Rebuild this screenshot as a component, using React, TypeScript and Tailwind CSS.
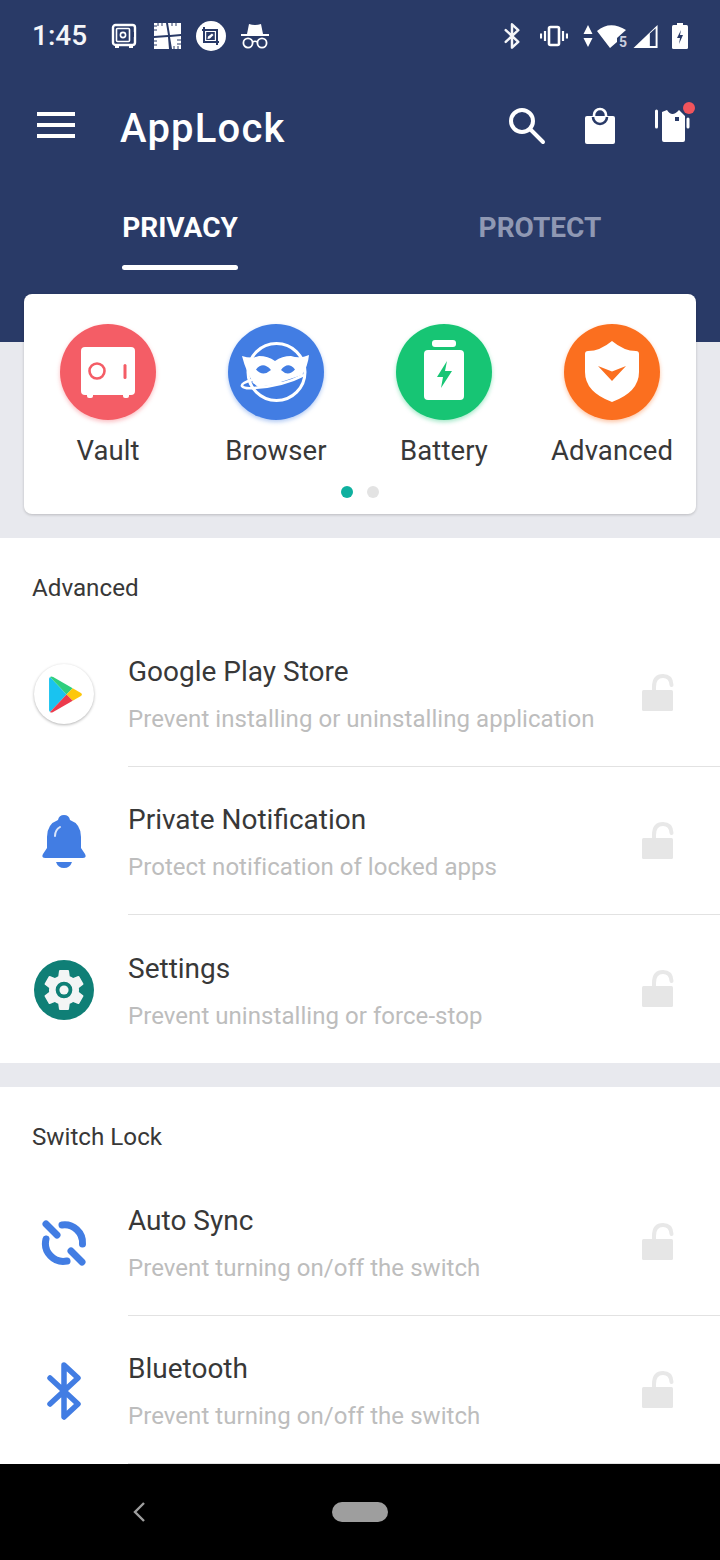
const Bluetooth = ({ className }: { className?: string }) => (
  <svg viewBox="0 0 34 58" className={className} fill="none" stroke="currentColor" strokeWidth="5.5" strokeLinecap="round" strokeLinejoin="round">
    <path d="M3 16 L31 42 L17 55 V3 L31 16 L3 42" />
  </svg>
);

const StatusLeft = () => (
  <div className="flex items-center">
    <span className="w-[79px] text-[28px] font-medium leading-none text-[#f4f5f8]">1:45</span>
    <svg viewBox="0 0 26 26" className="h-[26px] w-[26px]">
      <rect x="2" y="2" width="22" height="20" rx="2.5" fill="none" stroke="white" strokeWidth="2.4" />
      <rect x="5.5" y="5.5" width="13" height="13" rx="1" fill="none" stroke="white" strokeWidth="1.6" />
      <circle cx="12" cy="12" r="2.6" fill="none" stroke="white" strokeWidth="1.6" />
      <rect x="21" y="9" width="2" height="5" fill="#293a67" />
      <rect x="4" y="22" width="4" height="3" fill="white" />
      <rect x="18" y="22" width="4" height="3" fill="white" />
    </svg>
    <svg viewBox="0 0 28 28" className="ml-[16px] h-[28px] w-[28px]">
      <path d="M1 1 H13 L15 13 L1 14 Z M15 1 H28 V12 L17 13 Z M1 16 L15 15 L16 27 H1 Z M17 15 L28 14 V27 H19 Z" fill="white" />
      <path d="M1 4 H4 M1 8 H4 M1 19 H4 M1 23 H4 M24 18 H28 M24 22 H28 M5 1 V4 M9 1 V4 M19 1 V4 M23 1 V4 M21 24 V27 M25 24 V27" stroke="#293a67" strokeWidth="1" />
    </svg>
    <svg viewBox="0 0 30 30" className="ml-[15px] h-[30px] w-[30px]">
      <circle cx="15" cy="15" r="15" fill="white" />
      <path d="M8 6 V21 H23 M6 9 H21 V24" fill="none" stroke="#293a67" strokeWidth="2" />
      <rect x="10.2" y="11" width="8.6" height="8" fill="#293a67" />
      <path d="M11.5 18 L12 15.5 L16 12.5 L17.5 14 L14 17.5 Z" fill="white" />
    </svg>
    <svg viewBox="0 0 28 28" className="ml-[15px] h-[28px] w-[28px]">
      <path d="M6 12 L8 2 Q14 4 20 2 L22 12 Z" fill="white" />
      <rect y="12" width="28" height="2" fill="white" />
      <circle cx="7" cy="21" r="4.6" fill="none" stroke="white" strokeWidth="1.8" />
      <circle cx="21" cy="21" r="4.6" fill="none" stroke="white" strokeWidth="1.8" />
      <path d="M11.5 20 Q14 18.5 16.5 20" fill="none" stroke="white" strokeWidth="1.6" />
    </svg>
  </div>
);

const StatusRight = () => (
  <div className="flex items-center text-[#f4f5f8]">
    <Bluetooth className="h-[26px] w-[16px]" />
    <svg viewBox="0 0 28 22" className="ml-[20px] h-[22px] w-[28px]" fill="none" stroke="white">
      <rect x="9" y="2" width="10" height="18" rx="1.5" strokeWidth="2.6" />
      <path d="M5 6 V16 M1 8.5 V13.5 M23 6 V16 M27 8.5 V13.5" strokeWidth="2.2" />
    </svg>
    <svg viewBox="0 0 10 22" className="ml-[15px] h-[22px] w-[10px]" fill="white">
      <path d="M5 0 L9.5 9 H0.5 Z M5 22 L9.5 13 H0.5 Z" />
    </svg>
    <div className="relative ml-[4px] h-[26px] w-[30px]">
      <svg viewBox="0 0 30 26" className="h-[26px] w-[30px]">
        <path d="M0 8 Q13 -3 29 7 L20 15 V19 L13 25 Z" fill="white" />
      </svg>
      <span className="absolute bottom-[0px] right-[0px] text-[14px] font-bold leading-[14px] text-[#c9cede]">5</span>
    </div>
    <svg viewBox="0 0 26 26" className="ml-[6px] h-[25px] w-[26px]">
      <path d="M0 25 L25 1 V25 Z" fill="white" />
      <path d="M17 10 L23 4.5 V23 H17 Z" fill="#293a67" />
    </svg>
    <svg viewBox="0 0 16 26" className="ml-[13px] h-[26px] w-[16px]" fill="white">
      <rect x="5" y="0" width="6" height="3" />
      <rect x="0" y="2" width="16" height="24" rx="1.5" />
      <path d="M9 7 L5 15 H8 L7 21 L11 12 H8 Z" fill="#293a67" />
    </svg>
  </div>
);

const Toolbar = () => (
  <div className="flex h-[112px] items-center pl-[37px]">
    <div className="mb-[6px] flex w-[38px] flex-col gap-[7px]">
      <div className="h-[4px] bg-white" />
      <div className="h-[4px] bg-white" />
      <div className="h-[4px] bg-white" />
    </div>
    <span className="ml-[45px] mt-[2px] text-[40px] font-medium leading-none tracking-[1.2px] text-white">AppLock</span>
    <div className="ml-auto flex items-center pb-[4px] pr-[28px]">
      <svg viewBox="0 0 38 38" className="h-[38px] w-[38px]" fill="none" stroke="white" strokeWidth="4" strokeLinecap="round">
        <circle cx="14" cy="14" r="11" />
        <path d="M22 22 L35 35" />
      </svg>
      <svg viewBox="0 0 32 38" className="ml-[38px] h-[38px] w-[32px]">
        <path d="M10 10 V8 A6 6 0 0 1 22 8 V10" fill="none" stroke="white" strokeWidth="2.6" />
        <rect x="1" y="9" width="30" height="28" rx="2" fill="white" />
        <path d="M9 10 A7 7 0 0 0 23 10" fill="none" stroke="#293a67" strokeWidth="2.6" />
      </svg>
      <div className="relative ml-[38px] h-[38px] w-[38px]">
        <svg viewBox="0 0 38 38" className="h-[38px] w-[38px]">
          <path d="M2.5 4 V20" stroke="white" strokeWidth="3" strokeLinecap="round" />
          <path d="M34 12 V20" stroke="white" strokeWidth="3" strokeLinecap="round" />
          <path d="M8 5 L13 3 Q18 11 25 3 L31 9 V33 Q31 35 29 35 H10 Q8 35 8 33 Z" fill="white" />
          <rect x="21" y="10" width="4" height="4" fill="#293a67" />
        </svg>
        <div className="absolute right-[-3px] top-[-5px] h-[12px] w-[12px] rounded-full bg-[#f0545c]" />
      </div>
    </div>
  </div>
);

const Tabs = () => (
  <div className="flex">
    <div className="flex w-[360px] flex-col items-center">
      <span className="mt-[28px] text-[28px] font-bold leading-[32px] text-white">PRIVACY</span>
      <div className="mt-[21px] h-[5px] w-[116px] rounded-full bg-white" />
    </div>
    <div className="flex w-[360px] flex-col items-center">
      <span className="mt-[28px] text-[28px] font-bold leading-[32px] text-[#8f98b3]">PROTECT</span>
    </div>
  </div>
);

const VaultIcon = () => (
  <svg viewBox="0 0 96 96" className="h-full w-full">
    <rect x="21" y="23" width="54" height="48" rx="4" fill="white" />
    <rect x="27" y="68" width="6" height="6" rx="2" fill="white" />
    <rect x="63" y="68" width="6" height="6" rx="2" fill="white" />
    <circle cx="37" cy="47" r="7.5" fill="none" stroke="#f45d66" strokeWidth="2.6" />
    <rect x="63.5" y="40" width="3" height="15" rx="1.5" fill="#f45d66" />
  </svg>
);

const BrowserIcon = () => (
  <svg viewBox="0 0 96 96" className="h-full w-full">
    <circle cx="48.5" cy="48" r="28.5" fill="none" stroke="white" strokeWidth="3" />
    <path d="M14 32 Q24 35 31 32 Q40 32 47 37 Q54 32 63 32 Q72 35 81 31 Q80 42 74 51 L47 60 L26 60 Q18 48 14 32 Z" fill="white" />
    <path d="M28 45.5 Q35 37 43 46 Q35 53 28 45.5 Z M53 46 Q60 37 67 45.5 Q60 53 53 46 Z" fill="#427de3" />
    <path d="M24 56 Q13 59 14 62 Q16 65 26 64 Q55 62 76 51" fill="none" stroke="white" strokeWidth="2.6" />
    <path d="M24 58 L60 58 L30 63 Z" fill="white" />
  </svg>
);

const BatteryIcon = () => (
  <svg viewBox="0 0 96 96" className="h-full w-full">
    <rect x="36" y="16" width="24" height="7" rx="3" fill="white" />
    <rect x="28" y="26" width="40" height="50" rx="4" fill="white" />
    <path d="M51 37 L41 53 H47 L45 64 L56 47 H49 Z" fill="#17c574" />
  </svg>
);

const ShieldIcon = () => (
  <svg viewBox="0 0 96 96" className="h-full w-full">
    <path d="M48 17 Q60 27 72 27 Q75 27 75 30 V48 Q75 68 48 78 Q21 68 21 48 V30 Q21 27 24 27 Q36 27 48 17 Z" fill="white" />
    <path d="M34 42 L48 47.5 L62 42 L48 57 Z" fill="#fb6f1f" />
  </svg>
);

const shortcuts = [
  { label: "Vault", color: "bg-[#f45d66]", glow: "shadow-[0_2px_4px_rgba(244,93,102,0.4)]", icon: <VaultIcon /> },
  { label: "Browser", color: "bg-[#427de3]", glow: "shadow-[0_2px_4px_rgba(66,125,227,0.4)]", icon: <BrowserIcon /> },
  { label: "Battery", color: "bg-[#17c574]", glow: "shadow-[0_2px_4px_rgba(23,197,116,0.4)]", icon: <BatteryIcon /> },
  { label: "Advanced", color: "bg-[#fb6f1f]", glow: "shadow-[0_2px_4px_rgba(251,111,31,0.4)]", icon: <ShieldIcon /> },
];

const ShortcutCard = () => (
  <div className="relative mx-[24px] mt-[-48px] h-[220px] rounded-[8px] bg-white pt-[30px] shadow-[0_1px_3px_rgba(0,0,0,0.2)]">
    <div className="grid grid-cols-4">
      {shortcuts.map((s) => (
        <div key={s.label} className="flex flex-col items-center">
          <div className={`h-[96px] w-[96px] rounded-full ${s.color} ${s.glow}`}>{s.icon}</div>
          <span className="mt-[14px] text-[27.5px] leading-[34px] tracking-[0.1px] text-[#383838]">{s.label}</span>
        </div>
      ))}
    </div>
    <div className="mt-[18px] flex justify-center gap-[14px]">
      <div className="h-[12px] w-[12px] rounded-full bg-[#0fb09f]" />
      <div className="h-[12px] w-[12px] rounded-full bg-[#e3e3e3]" />
    </div>
  </div>
);

const PlayIcon = () => (
  <div className="flex h-[60px] w-[60px] items-center justify-center rounded-full bg-white shadow-[0_1px_3px_rgba(0,0,0,0.3)]">
    <svg viewBox="0 0 32 36" className="ml-[3px] h-[37px] w-[33px]">
      <path d="M1 1 L17 18 L1 35 Q0 34 0 33 V3 Q0 2 1 1 Z" fill="#19c3f0" />
      <path d="M1 1 Q2 0 4 1 L23 12 L17 18 Z" fill="#2fcf7e" />
      <path d="M23 12 L31 16.5 Q33 18 31 19.5 L23 24 L17 18 Z" fill="#fdc70c" />
      <path d="M1 35 L17 18 L23 24 L4 35 Q2 36 1 35 Z" fill="#ec3b4c" />
    </svg>
  </div>
);

const BellIcon = () => (
  <svg viewBox="0 0 44 54" className="h-[54px] w-[44px]">
    <path d="M22 0 Q27 0 28 5 Q39 9 39 22 V33 L43 39 Q45 43 41 43 H3 Q-1 43 1 39 L5 33 V22 Q5 9 16 5 Q17 0 22 0 Z" fill="#427de3" />
    <path d="M13 21 Q13 15 18 12" fill="none" stroke="#dbe6fa" strokeWidth="2" strokeLinecap="round" />
    <path d="M14 47 H30 Q28 53 22 53 Q16 53 14 47 Z" fill="#427de3" />
  </svg>
);

const GearIcon = () => (
  <div className="flex h-[60px] w-[60px] items-center justify-center rounded-full bg-[#0f7f76]">
    <svg viewBox="0 0 24 24" className="h-[50px] w-[50px]">
      <path
        fillRule="evenodd"
        fill="#f3f5f5"
        d="M19.14 12.94c.04-.3.06-.61.06-.94 0-.32-.02-.64-.07-.94l2.03-1.58a.49.49 0 0 0 .12-.61l-1.92-3.32a.488.488 0 0 0-.59-.22l-2.39.96c-.5-.38-1.03-.7-1.62-.94l-.36-2.54a.484.484 0 0 0-.48-.41h-3.84c-.24 0-.43.17-.47.41l-.36 2.54c-.59.24-1.13.57-1.62.94l-2.39-.96c-.22-.08-.47 0-.59.22L2.74 8.87c-.12.21-.08.47.12.61l2.03 1.58c-.05.3-.09.63-.09.94s.02.64.07.94l-2.03 1.58a.49.49 0 0 0-.12.61l1.92 3.32c.12.22.37.29.59.22l2.39-.96c.5.38 1.03.7 1.62.94l.36 2.54c.05.24.24.41.48.41h3.84c.24 0 .44-.17.47-.41l.36-2.54c.59-.24 1.13-.56 1.62-.94l2.39.96c.22.08.47 0 .59-.22l1.92-3.32c.12-.22.07-.47-.12-.61l-2.01-1.58zM12 16a4 4 0 1 1 0-8 4 4 0 0 1 0 8z"
      />
      <circle cx="12" cy="12" r="2.2" fill="#f3f5f5" />
    </svg>
  </div>
);

const SyncIcon = () => (
  <svg viewBox="0 0 46 46" className="h-[46px] w-[46px]" fill="none" stroke="#427de3" strokeWidth="7" strokeLinecap="round">
    <path d="M5 4 L16 15" />
    <path d="M30 31 L41 42" />
    <path d="M21 5 A18 18 0 0 1 41.5 24" />
    <path d="M5 19 A18 18 0 0 0 26 41" />
  </svg>
);

const Lock = () => (
  <svg viewBox="0 0 32 38" className="h-[38px] w-[32px]">
    <path d="M12 17 V13 Q12 2 21 2 Q29 2 29.5 11" fill="none" stroke="#e8e8e8" strokeWidth="4" strokeLinecap="round" />
    <rect x="0" y="16" width="31" height="21" rx="1.5" fill="#e6e6e6" />
  </svg>
);

const Row = ({ icon, title, sub, border = true }: { icon: React.ReactNode; title: string; sub: string; border?: boolean }) => (
  <div className="flex h-[148px]">
    <div className="flex w-[128px] shrink-0 items-center justify-center pt-[2px]">{icon}</div>
    <div className={`flex flex-1 items-center pr-[46px] ${border ? "border-b border-[#e2e2e2]" : ""}`}>
      <div className="flex-1 pt-[6px]">
        <div className="text-[28px] leading-[34px] text-[#383838]">{title}</div>
        <div className="mt-[13px] text-[24px] leading-[34px] tracking-[0.05px] text-[#bdbdbd]">{sub}</div>
      </div>
      <Lock />
    </div>
  </div>
);

const SectionLabel = ({ children }: { children: string }) => (
  <div className="flex h-[81px] items-end pb-[14px] pl-[32px] text-[24.2px] leading-[34px] text-[#383838]">{children}</div>
);

export default function App() {
  return (
    <div className="flex h-[1560px] w-[720px] flex-col overflow-hidden bg-[#e8e9ee] font-['Roboto',sans-serif]">
      <header className="h-[342px] shrink-0 bg-[#293a67]">
        <div className="flex h-[72px] items-center justify-between pl-[32px] pr-[32px]">
          <StatusLeft />
          <StatusRight />
        </div>
        <Toolbar />
        <Tabs />
      </header>
      <ShortcutCard />
      <section className="mt-[24px] h-[525px] bg-white">
        <SectionLabel>Advanced</SectionLabel>
        <Row icon={<PlayIcon />} title="Google Play Store" sub="Prevent installing or uninstalling application" />
        <Row icon={<BellIcon />} title="Private Notification" sub="Protect notification of locked apps" />
        <Row icon={<GearIcon />} title="Settings" sub="Prevent uninstalling or force-stop" border={false} />
      </section>
      <section className="mt-[24px] flex-1 overflow-hidden bg-white">
        <SectionLabel>Switch Lock</SectionLabel>
        <Row icon={<SyncIcon />} title="Auto Sync" sub="Prevent turning on/off the switch" />
        <Row icon={<Bluetooth className="h-[58px] w-[34px] text-[#427de3]" />} title="Bluetooth" sub="Prevent turning on/off the switch" />
      </section>
      <nav className="relative flex h-[96px] shrink-0 items-center justify-center bg-black">
        <svg viewBox="0 0 12 20" className="absolute left-[133px] top-[38px] h-[20px] w-[12px]" fill="none" stroke="#9e9e9e" strokeWidth="2.4">
          <path d="M11 1 L2 10 L11 19" />
        </svg>
        <div className="h-[20px] w-[56px] rounded-full bg-[#9e9e9e]" />
      </nav>
    </div>
  );
}
